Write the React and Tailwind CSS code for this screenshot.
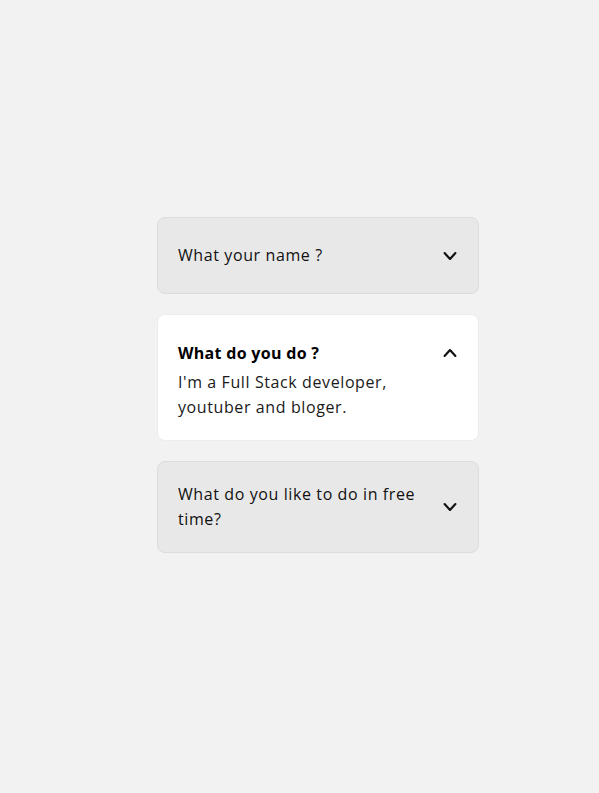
import React from "react";

const Chevron = ({ up }) => (
  <svg width="20" height="20" viewBox="0 0 24 24" fill="none" stroke="#111" strokeWidth="2.6" strokeLinecap="round" strokeLinejoin="round">
    {up ? <path d="M5.5 15.5l6.5-7 6.5 7" /> : <path d="M5.5 8.5l6.5 7 6.5-7" />}
  </svg>
);

const Item = ({ q, a, open }) => (
  <div className={open ? "rounded-lg border border-[#ececec] bg-white px-5 py-5" : "rounded-lg border border-[#dcdcdc] bg-[#e8e8e8] px-5 py-5"}>
    <div className="flex min-h-[35px] items-center justify-between gap-5">
      <span className={open ? "text-[16px] font-bold leading-[24px] tracking-[0.3px] text-black" : "text-[16px] leading-[25px] tracking-[0.6px] text-[#111]"}>{q}</span>
      <span className="-mr-[2px] flex shrink-0 items-center"><Chevron up={open} /></span>
    </div>
    {a && <p className="max-w-[230px] text-[16px] leading-[25px] tracking-[0.6px] text-[#1a1a1a]">{a}</p>}
  </div>
);

export default function App() {
  return (
    <div className="min-h-[793px] bg-[#f2f2f2] pt-[217px] pl-[157px]" style={{ fontFamily: '"Open Sans", "Noto Sans", sans-serif' }}>
      <div className="flex w-[322px] flex-col gap-[20px]">
        <Item q="What your name ?" />
        <Item q="What do you do ?" a="I'm a Full Stack developer, youtuber and bloger." open />
        <Item q="What do you like to do in free time?" />
      </div>
    </div>
  );
}
